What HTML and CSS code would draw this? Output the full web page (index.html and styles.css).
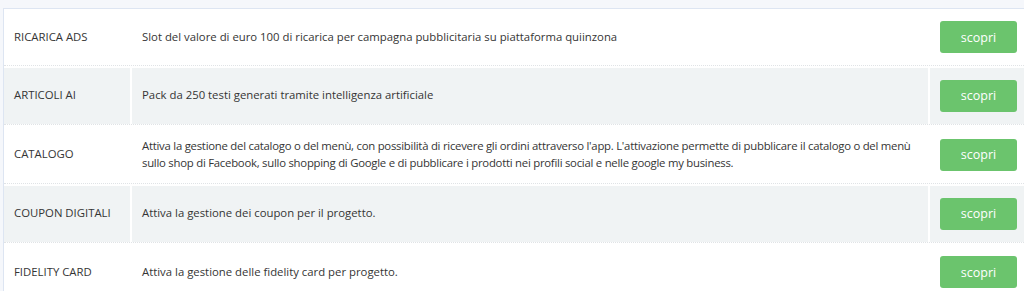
FILE: index.html
```html
<!DOCTYPE html>
<html lang="it">
<head>
<meta charset="utf-8">
<title>Servizi</title>
<link rel="stylesheet" href="styles.css">
</head>
<body>
<div class="page">
  <div class="card">
    <div class="row">
      <div class="cell name">RICARICA ADS</div>
      <div class="cell desc">Slot del valore di euro 100 di ricarica per campagna pubblicitaria su piattaforma quiinzona</div>
      <div class="cell action"><button class="btn">scopri</button></div>
    </div>
    <div class="row striped">
      <div class="cell name">ARTICOLI AI</div>
      <div class="cell desc">Pack da 250 testi generati tramite intelligenza artificiale</div>
      <div class="cell action"><button class="btn">scopri</button></div>
    </div>
    <div class="row">
      <div class="cell name">CATALOGO</div>
      <div class="cell desc desc-long">Attiva la gestione del catalogo o del menù, con possibilità di ricevere gli ordini attraverso l'app. L'attivazione permette di pubblicare il catalogo o del menù sullo shop di Facebook, sullo shopping di Google e di pubblicare i prodotti nei profili social e nelle google my business.</div>
      <div class="cell action"><button class="btn">scopri</button></div>
    </div>
    <div class="row striped">
      <div class="cell name">COUPON DIGITALI</div>
      <div class="cell desc">Attiva la gestione dei coupon per il progetto.</div>
      <div class="cell action"><button class="btn">scopri</button></div>
    </div>
    <div class="row">
      <div class="cell name">FIDELITY CARD</div>
      <div class="cell desc">Attiva la gestione delle fidelity card per progetto.</div>
      <div class="cell action"><button class="btn">scopri</button></div>
    </div>
  </div>
</div>
</body>
</html>
```

FILE: styles.css
```css
html, body {
  margin: 0;
  padding: 0;
  background: #f5f7fb;
}
body {
  font-family: "Open Sans", "Noto Sans", sans-serif;
  font-size: 11.35px;
  color: #353535;
}
.page {
  padding: 8px 0 0 3px;
}
.card {
  background: #ffffff;
  border-top: 1px solid #dde5f2;
  border-left: 1px solid #dde5f2;
}
.row {
  display: grid;
  grid-template-columns: 126px 796px 1fr;
  column-gap: 2px;
  border-bottom: 1px dotted #e0e3e6;
  margin-bottom: 1.5px;
}
.cell {
  display: flex;
  align-items: center;
  min-height: 32px;
  padding: 12px 10px;
  line-height: 16.5px;
}
.desc {
  padding-right: 6px;
}
.desc-long {
  letter-spacing: -0.25px;
}
.striped .cell {
  background: #f0f3f4;
}
.action {
  padding: 12px 7px 12px 10px;
}
.btn {
  width: 77px;
  height: 32px;
  border: none;
  border-radius: 3px;
  background: #6bc46d;
  color: #ffffff;
  font-family: "Open Sans", "Noto Sans", sans-serif;
  font-size: 12.5px;
  padding: 0;
  cursor: pointer;
}
```
